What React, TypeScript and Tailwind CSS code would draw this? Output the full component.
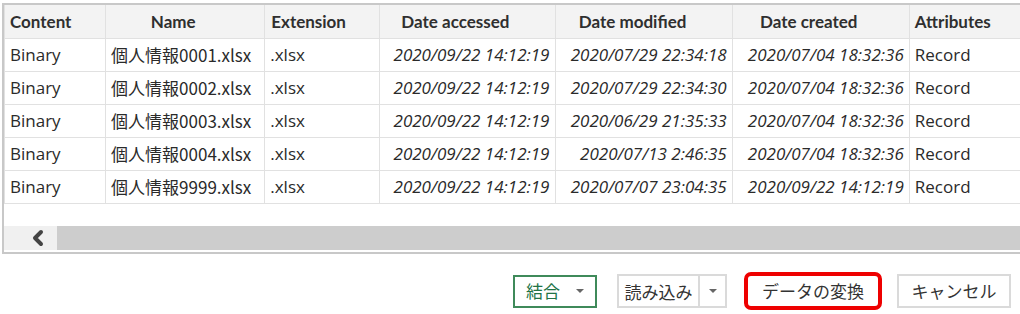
import { ChevronLeft } from "lucide-react";

const cols = [
  { label: "Content", w: "w-[101px]", head: "text-left pl-[5px]" },
  { label: "Name", w: "w-[159px]", head: "text-center pr-[24px]" },
  { label: "Extension", w: "w-[115px]", head: "text-left pl-[6px]" },
  { label: "Date accessed", w: "w-[175px]", head: "text-center pr-[24px]" },
  { label: "Date modified", w: "w-[177px]", head: "text-center pr-[22px]" },
  { label: "Date created", w: "w-[177px]", head: "text-center pr-[24px]" },
  { label: "Attributes", w: "w-[130px]", head: "text-left pl-[5px]" },
];

const rows = [
  ["個人情報0001.xlsx", "2020/09/22 14:12:19", "2020/07/29 22:34:18", "2020/07/04 18:32:36"],
  ["個人情報0002.xlsx", "2020/09/22 14:12:19", "2020/07/29 22:34:30", "2020/07/04 18:32:36"],
  ["個人情報0003.xlsx", "2020/09/22 14:12:19", "2020/06/29 21:35:33", "2020/07/04 18:32:36"],
  ["個人情報0004.xlsx", "2020/09/22 14:12:19", "2020/07/13 2:46:35", "2020/07/04 18:32:36"],
  ["個人情報9999.xlsx", "2020/09/22 14:12:19", "2020/07/07 23:04:35", "2020/09/22 14:12:19"],
];

const body = "font-['Segoe_UI','Open_Sans','Noto_Sans_CJK_JP',sans-serif]";
const cell = "border border-[#e1e1e1] h-[33px] px-[5px] whitespace-nowrap text-[17px] text-[#2a2a2a]";

const Caret = () => (
  <span className="inline-block w-0 h-0 border-l-[4px] border-r-[4px] border-t-[4px] border-l-transparent border-r-transparent border-t-[#666]" />
);

export default function App() {
  return (
    <div className="w-[1020px] h-[314px] bg-white overflow-hidden">
      <div className="ml-[2px] mt-[3px] w-[1040px] h-[251px] border-2 border-[#c8c8c8] flex flex-col">
        <table className={`table-fixed border-collapse ${body}`}>
          <thead>
            <tr className="bg-[#f3f3f3]">
              {cols.map((c) => (
                <th
                  key={c.label}
                  className={`${c.w} ${c.head} border border-[#e1e1e1] border-t-0 h-[33px] font-['Lato',sans-serif] font-bold text-[17px] text-[#2f2f2f] whitespace-nowrap`}
                >
                  {c.label}
                </th>
              ))}
            </tr>
          </thead>
          <tbody>
            {rows.map((r) => (
              <tr key={r[0]}>
                <td className={`${cell} text-left`}>Binary</td>
                <td className={`${cell} text-left font-['Noto_Sans_CJK_JP',sans-serif] text-[17.5px]`}>{r[0]}</td>
                <td className={`${cell} text-left`}>.xlsx</td>
                <td className={`${cell} text-right italic text-[17.5px]`}>{r[1]}</td>
                <td className={`${cell} text-right italic text-[17.5px]`}>{r[2]}</td>
                <td className={`${cell} text-right italic text-[17.5px]`}>{r[3]}</td>
                <td className={`${cell} text-left`}>Record</td>
              </tr>
            ))}
          </tbody>
        </table>
        <div className="flex-1" />
        <div className="h-[24px] flex bg-[#f0f0f0] mb-[2px]">
          <div className="w-[53px] flex items-center">
            <ChevronLeft size={24} strokeWidth={4} className="text-[#444] ml-[22px]" />
          </div>
          <div className="flex-1 bg-[#cdcdcd]" />
        </div>
      </div>
      <div className="flex items-center mt-[18px] ml-[513px] font-['Noto_Sans_CJK_JP',sans-serif] text-[17px] text-[#333]">
        <button className="w-[84px] h-[33px] border-2 border-[#3f8a5a] flex items-center justify-center gap-[16px] text-[#217346]">
          <span>結合</span>
          <Caret />
        </button>
        <div className="ml-[20px] w-[110px] h-[34px] border-2 border-[#dadada] flex">
          <div className="w-[81px] flex items-center justify-center border-r-2 border-[#dadada] leading-none">読み込み</div>
          <div className="flex-1 flex items-center justify-center">
            <Caret />
          </div>
        </div>
        <div className="ml-[17px] w-[138px] h-[38px] border-[4px] border-[#ee0000] rounded-[7px] flex items-center justify-center">
          データの変換
        </div>
        <div className="ml-[15px] w-[114px] h-[34px] border-2 border-[#dadada] flex items-center justify-center">
          キャンセル
        </div>
      </div>
    </div>
  );
}
